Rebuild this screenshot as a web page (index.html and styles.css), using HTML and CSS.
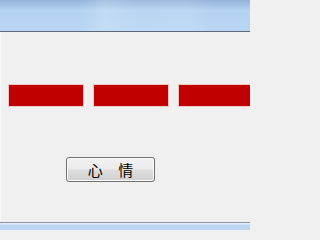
FILE: index.html
```html
<!DOCTYPE html>
<html>
<head>
<meta charset="utf-8">
<link rel="stylesheet" href="styles.css">
</head>
<body>
<div class="window">
  <div class="titlebar"></div>
  <div class="client">
    <div class="bars">
      <div class="bar"></div>
      <div class="bar"></div>
      <div class="bar"></div>
    </div>
    <div class="actions">
      <button class="btn">心 情</button>
    </div>
  </div>
  <div class="frame-bottom"></div>
</div>
</body>
</html>
```

FILE: styles.css
```css
html, body {
  margin: 0;
  padding: 0;
  background: #f0f0f0;
}
.window {
  display: flex;
  flex-direction: column;
  width: 250px;
  height: 230px;
  overflow: hidden;
}
.titlebar {
  height: 31px;
  flex: none;
  background:
    linear-gradient(90deg, rgba(255,255,255,0) 0%, rgba(255,255,255,0) 32%, rgba(255,255,255,0.18) 42%, rgba(255,255,255,0.08) 55%, rgba(255,255,255,0.1) 75%, rgba(255,255,255,0) 85%),
    linear-gradient(180deg, #94b3d9 0px, #a3c2e6 5px, #b4d2f1 10px, #b8d6f4 100%);
  border-bottom: 1px solid #5d6876;
}
.client {
  flex: 1;
  display: flex;
  flex-direction: column;
  background: #f0f0f0;
  border-left: 1px solid #f8f8f8;
}
.bars {
  display: flex;
  gap: 9px;
  margin-top: 52px;
  padding-left: 7px;
}
.bar {
  flex: none;
  width: 74px;
  height: 21px;
  background: #c00000;
  border: 1px solid #f2c4c4;
}
.actions {
  display: flex;
  margin-top: 50px;
  padding-left: 65px;
}
.btn {
  width: 89px;
  height: 25px;
  padding: 0;
  border: 1px solid #707070;
  border-radius: 3px;
  background: linear-gradient(180deg, #f2f2f2 0%, #ebebeb 48%, #dddddd 52%, #cfcfcf 100%);
  box-shadow: inset 0 0 0 1px #fcfcfc;
  font-family: "Noto Sans CJK SC", "Noto Sans CJK JP", sans-serif;
  font-size: 15px;
  line-height: 23px;
  color: #000;
  word-spacing: 12px;
}
.frame-bottom {
  flex: none;
  height: 7px;
  border-top: 1px solid #8d96a0;
  background: linear-gradient(180deg, #e3edf7 0px, #e3edf7 1px, #bcd6f2 2px, #bcd6f2 100%);
}
```
